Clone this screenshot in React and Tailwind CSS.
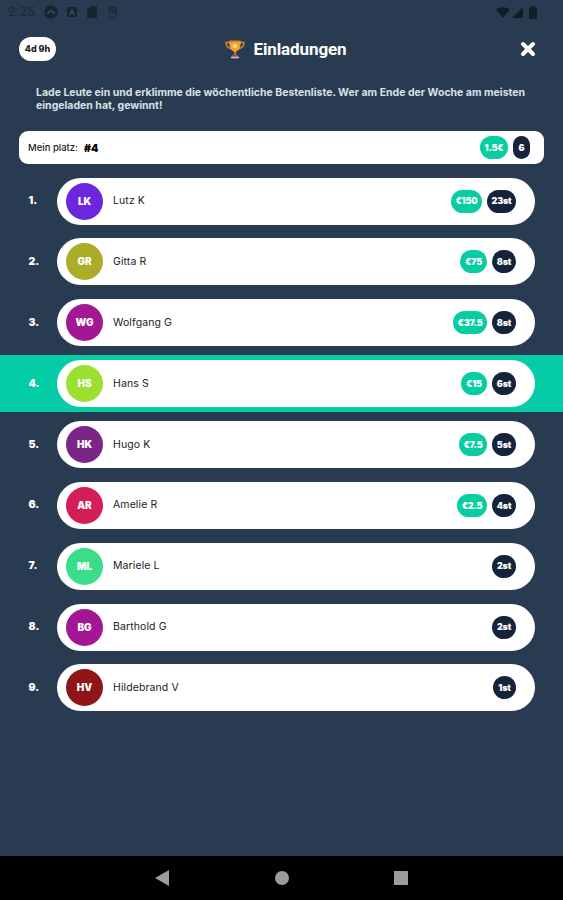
const players = [
  { initials: 'LK', name: 'Lutz K', color: 'bg-[#6b27dc]', prize: '€150', prizeWidth: 'w-[31px]', count: '23st', countWidth: 'w-[29px]' },
  { initials: 'GR', name: 'Gitta R', color: 'bg-[#abad27]', prize: '€75', prizeWidth: 'w-[27px]', count: '8st', countWidth: 'w-6' },
  { initials: 'WG', name: 'Wolfgang G', color: 'bg-[#a31694]', prize: '€37.5', prizeWidth: 'w-[34px]', count: '8st', countWidth: 'w-6' },
  { initials: 'HS', name: 'Hans S', color: 'bg-[#9be02f]', prize: '€15', prizeWidth: 'w-[26px]', count: '6st', countWidth: 'w-6', current: true },
  { initials: 'HK', name: 'Hugo K', color: 'bg-[#7b2687]', prize: '€7.5', prizeWidth: 'w-7', count: '5st', countWidth: 'w-6' },
  { initials: 'AR', name: 'Amelie R', color: 'bg-[#d41e58]', prize: '€2.5', prizeWidth: 'w-[30px]', count: '4st', countWidth: 'w-6' },
  { initials: 'ML', name: 'Mariele L', color: 'bg-[#3bdd89]', count: '2st', countWidth: 'w-6' },
  { initials: 'BG', name: 'Barthold G', color: 'bg-[#a31694]', count: '2st', countWidth: 'w-6' },
  { initials: 'HV', name: 'Hildebrand V', color: 'bg-[#8f1518]', count: '1st', countWidth: 'w-[23px]' },
];

function Badge({ children, width, green }) {
  return (
    <span
      className={`${width} ${green ? 'bg-[#08cda1]' : 'bg-[#15233b]'} flex h-[23px] shrink-0 items-center justify-center rounded-full font-['Inter',sans-serif] text-[9px] font-black tracking-[-0.2px] whitespace-nowrap text-white`}
    >
      {children}
    </span>
  );
}

function StatusBar() {
  return (
    <div className="flex h-6 items-center justify-between pr-[26px] pl-2 text-[#172530]">
      <div className="flex items-center">
        <span className="w-[27px] font-['Roboto',sans-serif] text-[13px] tracking-[0.5px] text-[#1b2a36]">2:25</span>
        <svg className="ml-[9px]" width="14" height="14" viewBox="0 0 14 14">
          <circle cx="7" cy="7" r="6.8" fill="currentColor" />
          <path d="M3.500 9 5.300 6M7 4.300V7M8.700 6l1.800 3" fill="none" stroke="#40566a" strokeWidth="1.400" />
        </svg>
        <svg className="ml-[9px]" width="10" height="10" viewBox="0 0 10 10">
          <rect width="10" height="10" rx="1.500" fill="currentColor" />
          <path d="M2.800 8 5 2.500 7.200 8M3.700 6.200h2.600" fill="none" stroke="#40566a" strokeWidth="1" />
        </svg>
        <svg className="ml-2.5" width="10" height="12" viewBox="0 0 10 12">
          <path d="M3.500 0H9a1 1 0 0 1 1 1v10a1 1 0 0 1-1 1H1a1 1 0 0 1-1-1V3.500z" fill="currentColor" />
        </svg>
        <svg className="ml-[11px]" width="9" height="13" viewBox="0 0 9 13" fill="none" stroke="currentColor" strokeWidth="1.100">
          <path d="M8 3V2.500Q8 1 6.500 1h-4Q1 1 1 2.500v2Q1 6 2.500 6H8M2 3.500h6V10.500Q8 12 6.500 12h-4Q1 12 1 10.500V9.500" />
        </svg>
      </div>
      <div className="flex items-center text-[#111e26]">
        <svg width="14" height="11" viewBox="0 0 14 11">
          <path d="M0 2.500Q7-2 14 2.500L7 11z" fill="currentColor" />
        </svg>
        <svg className="ml-0.5" width="11" height="11" viewBox="0 0 11 11">
          <path d="M11 0v11H0z" fill="currentColor" />
        </svg>
        <svg className="ml-1.5" width="8" height="13" viewBox="0 0 8 13">
          <path d="M2.500 0h3v1.300H7q1 0 1 1V12q0 1-1 1H1q-1 0-1-1V2.300q0-1 1-1h1.500z" fill="currentColor" />
        </svg>
      </div>
    </div>
  );
}

function Trophy() {
  return (
    <svg width="20" height="19" viewBox="0 0 20 19">
      <path d="M5 2.500H1q0 5.500 6 6.500M15 2.500h4q0 5.500-6 6.500" fill="none" stroke="#d98235" strokeWidth="1.500" />
      <path d="M4.300.800h11.400q.5 8.200-3.700 10.200l-1.200 1v3H9.200v-3L8 11Q3.800 9 4.300.800z" fill="#f2a12d" />
      <path d="M4.300.800h11.400v1.300H4.300z" fill="#d97f2e" />
      <path d="m10 3 .9 1.800 2 .3-1.500 1.400.4 2L10 7.600l-1.800.9.400-2-1.500-1.400 2-.3z" fill="#ffe58a" />
      <path d="M9 12h2v3H9z" fill="#cf6b3a" />
      <path d="M7 14.800h6V17H7z" fill="#765269" />
      <path d="M6 16.700h8v1.600H6z" fill="#d5c3cb" />
    </svg>
  );
}

function Row({ player, rank }) {
  return (
    <li className={`${player.current ? 'bg-[#04cca5]' : ''} flex h-[56.860px] items-center pr-7 pl-[28.500px]`}>
      <span className="w-[28.500px] shrink-0 font-['Inter',sans-serif] text-[10.5px] font-black text-white">{rank}.</span>
      <div className="flex h-[47px] flex-1 items-center rounded-full bg-white pr-[19px] pl-[9px]">
        <span
          className={`${player.color} flex size-[37px] shrink-0 items-center justify-center rounded-full font-['Inter',sans-serif] text-[10px] font-black text-white`}
        >
          {player.initials}
        </span>
        <span className="ml-2.5 flex-1 font-['Inter',sans-serif] text-[10.5px] tracking-[0.100px] text-[#222]">{player.name}</span>
        <div className="flex gap-[5px]">
          {player.prize && <Badge green width={player.prizeWidth}>{player.prize}</Badge>}
          <Badge width={player.countWidth}>{player.count}</Badge>
        </div>
      </div>
    </li>
  );
}

export default function App() {
  return (
    <div className="flex h-[900px] w-[563px] flex-col overflow-hidden bg-[#293b50]">
      <StatusBar />
      <header className="flex h-[50px] items-center justify-between pr-[27px] pl-[19px]">
        <span className="flex h-6 w-[37px] items-center justify-center rounded-full bg-white font-['Inter',sans-serif] text-[9px] font-extrabold whitespace-nowrap text-[#222]">4d 9h</span>
        <h1 className="mr-1 flex items-center gap-2 font-['Roboto',sans-serif] text-[17px] font-bold tracking-[-0.100px] text-white">
          <Trophy />
          <span className="pt-0.5">Einladungen</span>
        </h1>
        <svg width="16" height="16" viewBox="0 0 16 16">
          <path d="m3 3 10 10M13 3 3 13" stroke="white" strokeWidth="4" strokeLinecap="round" />
        </svg>
      </header>
      <p className="mt-[11.500px] pl-9 font-['Inter',sans-serif] text-[10.5px] leading-[13px] font-bold whitespace-nowrap text-[#d9e0e8]">
        Lade Leute ein und erklimme die wöchentliche Bestenliste. Wer am Ende der Woche am meisten
        <br />
        eingeladen hat, gewinnt!
      </p>
      <section className="mx-[19px] mt-[19.500px] flex h-[33px] items-center rounded-[9px] bg-white pr-3.5 pl-[9px] font-['Inter',sans-serif] text-[#222]">
        <span className="pt-0.5 text-[9.5px] font-medium">Mein platz:</span>
        <span className="ml-[6px] flex-1 pt-0.5 text-[10.5px] font-black text-black">#4</span>
        <div className="flex gap-[5px]">
          <Badge green width="w-7">1.5€</Badge>
          <Badge width="w-[17px]">6</Badge>
        </div>
      </section>
      <ol className="mt-[8.600px] flex flex-1 flex-col gap-1">
        {players.map((player, index) => (
          <Row key={player.name} player={player} rank={index + 1} />
        ))}
      </ol>
      <nav className="flex h-11 shrink-0 items-center justify-between bg-black pr-[155px] pl-[155px]">
        <svg width="14" height="16" viewBox="0 0 14 16">
          <path d="M14 0v16L0 8z" fill="#9c9c9c" />
        </svg>
        <span className="size-3.5 rounded-full bg-[#9c9c9c]" />
        <span className="size-3.5 bg-[#9c9c9c]" />
      </nav>
    </div>
  );
}
